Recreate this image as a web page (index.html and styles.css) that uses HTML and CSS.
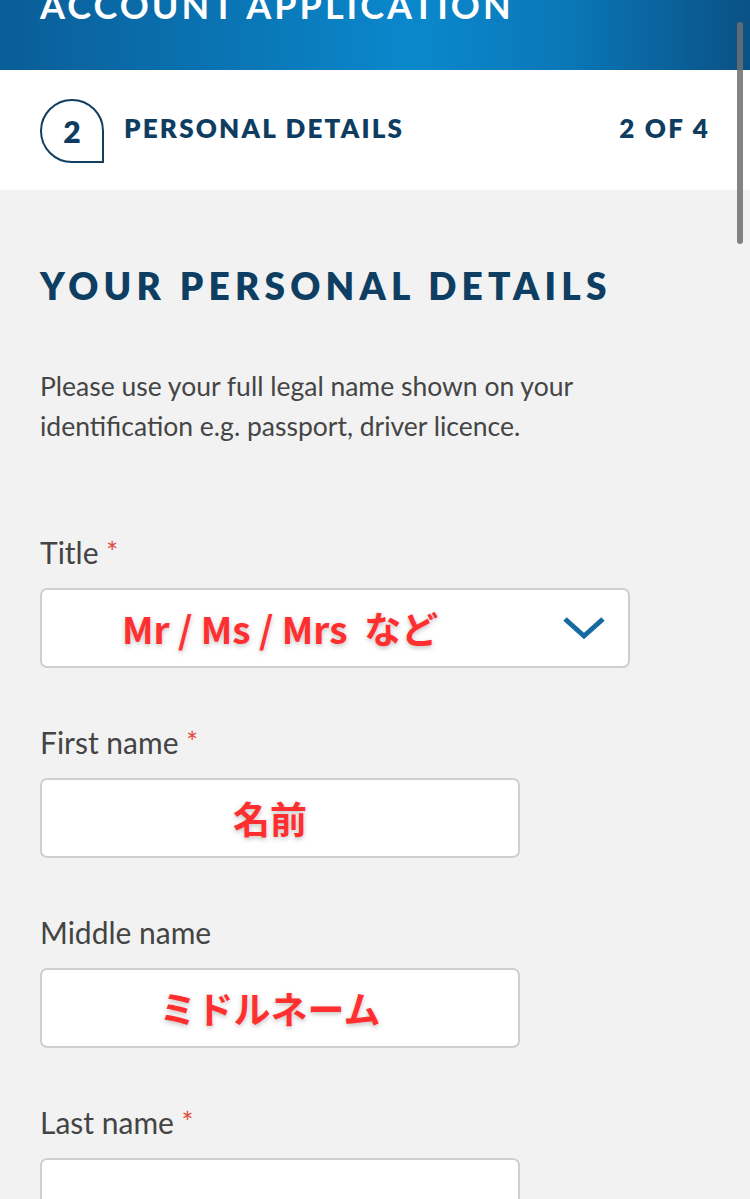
FILE: index.html
```html
<!DOCTYPE html>
<html lang="en">
<head>
<meta charset="utf-8">
<title>Account Application</title>
<link rel="stylesheet" href="styles.css">
</head>
<body>
<div class="page">
  <header class="topbar">
    <h1 class="app-title">ACCOUNT APPLICATION</h1>
  </header>
  <div class="stepbar">
    <div class="step-left">
      <span class="step-badge">2</span>
      <span class="step-name">PERSONAL DETAILS</span>
    </div>
    <span class="step-count">2 OF 4</span>
  </div>
  <main class="content">
    <h2 class="section-title">YOUR PERSONAL DETAILS</h2>
    <p class="intro">Please use your full legal name shown on your identification e.g. passport, driver licence.</p>

    <div class="field">
      <label class="label">Title <span class="req">*</span></label>
      <div class="box box-select">
        <span class="note note-select">Mr / Ms / Mrs&nbsp; など</span>
        <svg class="chevron" width="44" height="26" viewBox="0 0 44 26"><path d="M3 4 L22 21 L41 4" fill="none" stroke="#1769a2" stroke-width="5"/></svg>
      </div>
    </div>

    <div class="field">
      <label class="label">First name <span class="req">*</span></label>
      <div class="box box-input"><span class="note">名前</span></div>
    </div>

    <div class="field">
      <label class="label">Middle name</label>
      <div class="box box-input"><span class="note">ミドルネーム</span></div>
    </div>

    <div class="field">
      <label class="label">Last name <span class="req">*</span></label>
      <div class="box box-input"></div>
    </div>
  </main>
  <div class="scrollbar"></div>
</div>
</body>
</html>
```
FILE: styles.css
```css
html, body {
  margin: 0;
  padding: 0;
}
body {
  background: #f2f2f2;
  font-family: "Lato", "Noto Sans", sans-serif;
  overflow: hidden;
}
.page {
  position: relative;
  width: 750px;
  height: 1199px;
  overflow: hidden;
}
.topbar {
  height: 70px;
  overflow: hidden;
  background: linear-gradient(90deg, #0a5d97 0%, #0a78b8 35%, #0a88cc 55%, #0a78b8 75%, #0a5185 100%);
  padding: 0 40px;
}
.app-title {
  margin: -13px 0 0 0;
  color: #ffffff;
  font-family: "Lato", sans-serif;
  font-weight: 700;
  font-size: 36px;
  line-height: 36px;
  letter-spacing: 3px;
}
.stepbar {
  height: 120px;
  background: #ffffff;
  display: flex;
  align-items: center;
  justify-content: space-between;
  padding: 0 40px 0 40px;
}
.step-left {
  display: flex;
  align-items: center;
  gap: 20px;
}
.step-badge {
  width: 60px;
  height: 60px;
  border: 2px solid #123f60;
  border-radius: 50% 50% 0 50%;
  display: flex;
  align-items: center;
  justify-content: center;
  color: #0f3d61;
  font-family: "Lato", sans-serif;
  font-weight: 800;
  font-size: 30px;
  margin-top: 2px;
}
.step-name, .step-count {
  color: #0f3d61;
  font-family: "Lato", sans-serif;
  font-weight: 800;
  font-size: 26px;
  letter-spacing: 2.2px;
  margin-top: -4px;
}
.content {
  padding: 74px 40px 0 40px;
}
.section-title {
  margin: 0;
  color: #0e3f63;
  font-family: "Lato", sans-serif;
  font-weight: 800;
  font-size: 37px;
  line-height: 44px;
  letter-spacing: 5.2px;
}
.intro {
  margin: 58px 0 0 0;
  color: #454545;
  font-size: 26.5px;
  line-height: 40px;
  max-width: 600px;
}
.field {
  margin-top: 88px;
}
.field + .field {
  margin-top: 56px;
}
.label {
  display: block;
  color: #444444;
  font-size: 30px;
  line-height: 36px;
}
.req {
  color: #e5483f;
  font-size: 28px;
  vertical-align: 1px;
}
.box {
  margin-top: 18px;
  height: 76px;
  border: 2px solid #cfcfcf;
  border-radius: 7px;
  background: #ffffff;
  box-sizing: content-box;
  display: flex;
  align-items: center;
}
.box-select {
  width: 590px;
  justify-content: space-between;
  padding: 0 22px 0 80px;
  box-sizing: border-box;
  height: 80px;
}
.box-input {
  width: 476px;
  justify-content: center;
}
.note {
  color: #ff2f2f;
  font-family: "Noto Sans CJK JP", sans-serif;
  font-weight: 700;
  font-size: 37px;
  text-shadow: 0 2px 5px rgba(0, 0, 0, 0.25);
  margin-left: -20px;
}
.note-select {
  margin-left: 0;
}
.chevron {
  display: block;
}
.scrollbar {
  position: absolute;
  right: 7px;
  top: 22px;
  width: 6px;
  height: 222px;
  border-radius: 3px;
  background: rgba(110, 110, 110, 0.85);
}
```
